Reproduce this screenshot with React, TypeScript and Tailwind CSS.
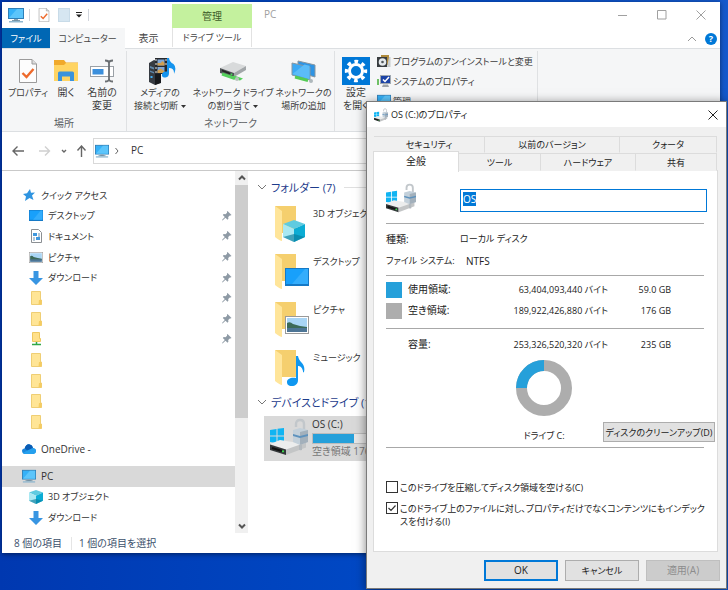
import { useEffect, useRef, type ReactNode } from "react";

function MonitorIcon({ className }: { className?: string }) {
  return (
    <svg viewBox="0 0 16 16" className={className}>
      <rect x="0.5" y="1.5" width="15" height="10" fill="#35b1f8" stroke="#2d7fb8" />
      <path d="M1 11 9 2h6v9z" fill="#5cc5fb" />
      <path d="M6 12h4v1.500H6z" fill="#8ba3b3" />
      <path d="M1 14h14v1.500H1z" fill="#8fb7cf" />
      <path d="M4 13h8v0.800H4z" fill="#5f8096" />
    </svg>
  );
}

function CheckDocIcon({ className }: { className?: string }) {
  return (
    <svg viewBox="0 0 18 24" className={className}>
      <path d="M0.500 0.500h12.500l4.500 4.500v18.500H0.500z" fill="#fdfdfd" stroke="#9b9b9b" />
      <path d="M13 0.500V5h4.500" fill="#ddd" stroke="#9b9b9b" />
      <path d="m3.500 14 4 4 7-8" fill="none" stroke="#ee6a2c" strokeWidth="2.400" />
    </svg>
  );
}

function OpenFolderIcon() {
  return (
    <svg viewBox="0 0 24 22" className="h-[22px] w-6">
      <path d="M0 0h10l2 2.500h12V21H0z" fill="#f0a92b" />
      <path d="M0 5h10l2-2h12v18H0z" fill="#ffd462" />
      <path d="M4 21v-8q0-1.500 1.500-1.500h13q1.500 0 1.500 1.500v8h-4v-4.500H8V21z" fill="#3b93dc" />
    </svg>
  );
}

function RenameIcon() {
  return (
    <svg viewBox="0 0 24 24" className="size-6">
      <rect x="0.500" y="7.500" width="23" height="10" fill="#fff" stroke="#9aa0a6" />
      <rect x="2.500" y="10" width="11" height="5.500" fill="#3b8fdc" />
      <path d="M15 1.500q4 0 4 2.500v16q0 2.500-4 2.500M23 1.500q-4 0-4 2.500v16q0 2.500 4 2.500" fill="none" stroke="#6b6f73" strokeWidth="1.800" />
    </svg>
  );
}

function MediaIcon() {
  return (
    <svg viewBox="0 0 28 28" className="ml-1 h-7 w-7">
      <path d="m1 6 5-3 6 2v21l-5 2-6-3z" fill="#363b42" />
      <path d="m7 8 6-2v20l-6 2z" fill="#171a1e" />
      <path d="m2 9 4 1.500v2L2 11zM2 13.500 6 15v1.500l-4-1.500z" fill="#5f86a8" />
      <rect x="2.500" y="19" width="2" height="2" fill="#3fb0f5" />
      <path d="M7 1h12v16H7z" fill="#26282c" />
      <path d="M9.500 2.500h7v6h-7zM9.500 10h7v6h-7z" fill="#7fa6d6" />
      <path d="M9.500 6h3l2-2 2 2v2.500h-7zM9.500 13.500l3.500-2 3.500 3v1.500h-7z" fill="#d0a052" />
      <path d="M7.500 2h1v2h-1zm0 4h1v2h-1zm0 4h1v2h-1zm0 4h1v2h-1zM17.500 2h1v2h-1zm0 4h1v2h-1z" fill="#e8e8e8" />
      <path d="M19 1h2q.500 4 4.500 6 3.500 3.500.500 10 .500-6-5-6v5q0 4-3.500 4.500-4 0-3.500-3 .500-3.500 5-3z" fill="#1594ee" />
    </svg>
  );
}

function NetDriveIcon() {
  return (
    <svg viewBox="0 0 30 20" className="h-5 w-[30px]">
      <path d="m2 7 13-6 13 4-12 7z" fill="#d8dadb" />
      <path d="m2 7 14 5v4L2 12z" fill="#505457" />
      <path d="m16 12 12-7v4l-12 7z" fill="#a2a6a9" />
      <path d="m4 9.500 8 3" stroke="#222" strokeWidth="1.500" />
      <circle cx="13.500" cy="13.300" r="0.900" fill="#40e050" />
      <path d="m4 13 13 4.500" stroke="#55cf5c" strokeWidth="3" />
      <path d="m13 17 9 2.500 3-2-9-3z" fill="#55cf5c" />
      <circle cx="19" cy="18" r="2" fill="#b9c4bd" />
    </svg>
  );
}

function NetPlaceIcon() {
  return (
    <svg viewBox="0 0 26 24" className="h-6 w-[26px]">
      <path d="m7 2 17 4v12L7 13z" fill="#2e94e4" stroke="#8796a0" />
      <path d="m1 4 18 4v13L1 16z" fill="#3ba9f4" stroke="#8796a0" />
      <path d="m1.500 15 12-9.500 5 1.300v13.500z" fill="#5bbcf8" />
      <path d="m4 18 13 3.500" stroke="#53cb55" strokeWidth="3" />
      <circle cx="20" cy="22" r="2" fill="#aeb8bc" />
    </svg>
  );
}

function SettingsIcon() {
  return (
    <svg viewBox="0 0 28 28" className="size-7">
      <path d="M0 0h28v28H0z" fill="#0078d7" />
      <circle cx="14" cy="14" r="6.500" fill="none" stroke="#fff" strokeWidth="3" />
      <circle cx="14" cy="14" r="9.400" fill="none" stroke="#fff" strokeWidth="3.600" strokeDasharray="3.690 3.690" strokeDashoffset="1.850" />
    </svg>
  );
}

function UninstallIcon() {
  return (
    <svg viewBox="0 0 14 14" className="size-[14px] shrink-0">
      <path d="M4 1h8v10H4z" fill="#b08b3c" />
      <path d="M0 3h10v10H0z" fill="#393d40" />
      <circle cx="5.500" cy="8" r="3.800" fill="#e5e9ec" />
      <circle cx="5.500" cy="8" r="1.300" fill="#50565a" />
      <path d="M12 3h1.500v10H10z" fill="#c8ccce" />
    </svg>
  );
}

function SystemIcon() {
  return (
    <svg viewBox="0 0 14 14" className="size-[14px] shrink-0">
      <path d="M0 5h2v6H0z" fill="#6fc065" />
      <rect x="3.500" y="1.500" width="10" height="8" fill="#1b43a6" stroke="#a0a8b0" />
      <path d="m6 5.500 2 2L12 3" fill="none" stroke="#fff" strokeWidth="1.500" />
      <path d="M6 10.500h5L12 13H5z" fill="#9ea3a8" />
    </svg>
  );
}

function DriveIcon({ className }: { className?: string }) {
  return (
    <svg viewBox="0 0 38 36" className={className}>
      <path d="m0 11 6.500-1v6.500H0zm7.500-1.200L14 8.900v7.600H7.500zM0 17.500h6.500V24L0 23zm7.500 0H14V25l-6.500-.900z" fill="#10b4f2" />
      <path d="m0 25 10-4 25 4-18 6z" fill="#eceded" />
      <path d="m0 25.500 16 5V36L0 31z" fill="#34383a" />
      <path d="m16 30.500 20-7v5L16 36z" fill="#c3c5c6" />
      <path d="m2 29 10 3" stroke="#111" strokeWidth="2" />
      <circle cx="13" cy="32.300" r="1.100" fill="#3ce04c" />
      <path d="M26 8V5q0-4 4-4t4 4v8" fill="none" stroke="#c2c7cb" strokeWidth="2.400" />
      <path d="m23 11 7-2 8 2v12l-8 3-7-3z" fill="#c3d0da" />
      <path d="m30 13 8-2v12l-8 3z" fill="#a3b0bb" />
      <path d="m23 15 7 2 8-2v2l-8 2-7-2z" fill="#5e92bd" />
      <path d="m29 26 3-1v6q-3 1-3-1z" fill="#b3b9be" />
    </svg>
  );
}

function CubeIcon({ className }: { className?: string }) {
  return (
    <svg viewBox="0 0 22 22" className={className}>
      <path d="m11 0 11 4-11 5L0 4z" fill="#5fcbe0" />
      <path d="M0 4l11 5v13L0 17z" fill="#a9e8f2" />
      <path d="m22 4-11 5v13l11-5z" fill="#0bacd4" />
      <path d="m11 14 11 3-11 5-11-5z" fill="#087c9c" opacity=".65" />
    </svg>
  );
}

function DesktopIcon({ className }: { className?: string }) {
  return (
    <svg viewBox="0 0 24 18" className={className} preserveAspectRatio="none">
      <path d="M0 0h24v18H0z" fill="#1579c6" />
      <path d="M1 1h22v15H1z" fill="#18a0fb" />
      <path d="M7 16 20 1h3v15z" fill="#34adfc" />
    </svg>
  );
}

function PictureIcon({ className }: { className?: string }) {
  return (
    <svg viewBox="0 0 24 18" className={className} preserveAspectRatio="none">
      <rect x="0.500" y="0.500" width="23" height="17" fill="#fff" stroke="#9a9a9a" />
      <path d="M2 2h20v14H2z" fill="#a9d5f5" />
      <path d="M2 7q3-2 6 1l7 2 7 1v2H2z" fill="#3c6a58" />
      <path d="M2 12h20v4H2z" fill="#4d7595" />
    </svg>
  );
}

function MusicIcon({ className }: { className?: string }) {
  return (
    <svg viewBox="0 0 18 30" className={className}>
      <path d="M9 0h2c1 7 8 7 6 16-1 1-1 0-1-1-1-4-3-5-5-5v14c0 4-3 6-6 6-4 0-5-2-5-4 0-3 4-5 9-4z" fill="#0f97f0" />
    </svg>
  );
}

function DocumentIcon() {
  return (
    <svg viewBox="0 0 11 14" className="h-[14px] w-[11px]">
      <path d="M0.500 0.500h7l3 3v10h-10z" fill="#fff" stroke="#8b8f93" />
      <path d="M2 4h4v3H2zM5 8h4v3H5z" fill="#3f97dc" />
      <path d="M7 5h2M7 7h2M2 9h2M2 11h2" stroke="#6d90ad" />
    </svg>
  );
}

function DownIcon() {
  return (
    <svg viewBox="0 0 14 14" className="size-[14px]">
      <path d="M4.500 0h5v7H14l-7 7-7-7h4.500z" fill="#3895e2" />
    </svg>
  );
}

function SmallFolderIcon() {
  return (
    <svg viewBox="0 0 11 14" className="h-[14px] w-[11px]">
      <path d="M0.500 0.500h9v8.500h1v4.500h-10z" fill="#ffe596" stroke="#efce74" />
      <path d="M8 9h2.500v4.500H7.500z" fill="#f5cc62" />
    </svg>
  );
}

function NetFolderIcon() {
  return (
    <svg viewBox="0 0 11 14" className="h-[14px] w-[11px]">
      <path d="M1.500 0.500h7v6h1v3h-8z" fill="#ffe08a" stroke="#efc860" />
      <path d="M5.500 10v2.500M1 12.500h9" stroke="#30a848" strokeWidth="1.500" />
    </svg>
  );
}

function StarIcon() {
  return (
    <svg viewBox="0 0 12 12" className="size-3">
      <path d="m7 0 1 3.800 4-.300L9 6.500l1.500 4.500L6.500 9 2 12l1-4.500L0 5l4-.700z" fill="#2f94e0" />
    </svg>
  );
}

function CloudIcon() {
  return (
    <svg viewBox="0 0 16 10" className="h-[10px] w-[14px]" preserveAspectRatio="none">
      <path d="M3 4.500Q5-.500 9 .500q3 .500 3.500 3.500Q16 4.500 16 7t-3 3H3Q0 9.500 0 7t3-2.500z" fill="#1a86dc" />
      <path d="M3 4.200Q5-.500 9 .500q3 .500 3.500 3.200L6.500 7z" fill="#0a5cb4" />
      <path d="M6 6.500 12.500 4Q16 4.500 16 7t-3 3H3q-1 0-2-1z" fill="#25a0ee" />
    </svg>
  );
}

function PinIcon() {
  return (
    <svg viewBox="0 0 10 10" className="size-[10px]">
      <path d="m5.500 0 4 4-1 .600-.700-.200L6.200 6l.200 1.800-.900.900-2-2L.500 9.500 0 9l2.800-3-2-2 .900-.900 1.800.200L5.100 1.700l-.200-.900z" fill="#8e9aa5" />
    </svg>
  );
}

function Chevron({ d, className }: { d: string; className: string }) {
  return (
    <svg viewBox="0 0 10 10" className={className} fill="none" stroke="currentColor">
      <path d={d} />
    </svg>
  );
}

function Caret() {
  return (
    <svg viewBox="0 0 5 3" className="ml-[3px] inline-block h-[3px] w-[5px] align-middle">
      <path d="M0 0h5L2.500 3z" fill="#333" />
    </svg>
  );
}

function RibbonButton({ icon, lines, className, menu }: { icon: ReactNode; lines: string[]; className: string; menu?: boolean }) {
  return (
    <button className={`flex shrink-0 flex-col items-center ${className}`}>
      <span className="flex h-[31px] items-center">{icon}</span>
      {lines.map((line, i) => (
        <span key={line} className="leading-[13px] whitespace-nowrap">
          {line}
          {menu && i === lines.length - 1 && <Caret />}
        </span>
      ))}
    </button>
  );
}

function RibbonGroup({ label, children }: { label: string; children: ReactNode }) {
  return (
    <section className="flex flex-col justify-between border-r border-[#dfe1e3] pt-1">
      <div className="flex">{children}</div>
      <div className="h-4 text-center leading-4 text-[#5c5f63]">{label}</div>
    </section>
  );
}

function Ribbon() {
  return (
    <div className="flex h-[84px] shrink-0 border-y border-[#dcdfe2] bg-[#f5f6f7] pt-[2px] text-[#3c3c3c]">
      <RibbonGroup label="場所">
        <RibbonButton className="w-[52px] text-[9px]" icon={<CheckDocIcon className="h-6 w-[18px]" />} lines={["プロパティ"]} />
        <RibbonButton className="w-6" icon={<OpenFolderIcon />} lines={["開く"]} />
        <RibbonButton className="w-12" icon={<RenameIcon />} lines={["名前の", "変更"]} />
      </RibbonGroup>
      <RibbonGroup label="ネットワーク">
        <RibbonButton className="w-[66px] text-[9px]" icon={<MediaIcon />} lines={["メディアの", "接続と切断"]} menu />
        <RibbonButton className="w-20 text-[9px]" icon={<NetDriveIcon />} lines={["ネットワーク ドライブ", "の割り当て"]} menu />
        <RibbonButton className="w-[61px] text-[9px]" icon={<NetPlaceIcon />} lines={["ネットワークの", "場所の追加"]} />
      </RibbonGroup>
      <section className="flex w-[203px] border-r border-[#dfe1e3]">
        <RibbonButton className="w-[42px] pt-1" icon={<SettingsIcon />} lines={["設定", "を開く"]} />
        <div className="flex flex-col text-[9px]">
          {[
            { icon: <UninstallIcon />, text: "プログラムのアンインストールと変更" },
            { icon: <SystemIcon />, text: "システムのプロパティ" },
            { icon: <MonitorIcon className="size-[14px] shrink-0" />, text: "管理" },
          ].map((item) => (
            <button key={item.text} className="flex h-5 items-center gap-[2px] whitespace-nowrap">
              {item.icon}
              {item.text}
            </button>
          ))}
        </div>
      </section>
    </div>
  );
}

function TitleBar() {
  return (
    <header className="flex h-[26px] shrink-0 items-stretch pl-[6px] text-[#a0a0a0]">
      <div className="flex w-[164px] items-center">
        <MonitorIcon className="size-4" />
        <span className="mx-[5px] h-3 w-px bg-gray-300" />
        <button aria-label="プロパティ" className="ml-[3px]">
          <CheckDocIcon className="h-[14px] w-3" />
        </button>
        <button aria-label="新しいフォルダー" className="ml-2 h-[14px] w-3 border border-[#c8dbe8] bg-[#d6e6f1]" />
        <button aria-label="カスタマイズ" className="ml-[6px]">
          <svg viewBox="0 0 6 6" className="size-[6px]">
            <path d="M0 0h6v1H0zM0 2.500h6L3 5.500z" fill="#222" />
          </svg>
        </button>
        <span className="mx-[6px] h-3 w-px bg-gray-300" />
      </div>
      <div className="mt-[2px] flex w-20 items-center justify-center bg-[#c4f19e] text-[#3d5c2a]">管理</div>
      <span className="ml-3 flex-1 leading-[25px]">PC</span>
      <div className="flex w-[118px] items-center justify-between pr-[14px] pl-4">
        <button aria-label="最小化">
          <Chevron className="size-[10px]" d="M0 5.500h9" />
        </button>
        <button aria-label="最大化">
          <Chevron className="size-[10px]" d="M0.500 0.500h8.500v8.500H0.500z" />
        </button>
        <button aria-label="閉じる">
          <Chevron className="size-[10px]" d="m0.500 0.500 9 9m0-9-9 9" />
        </button>
      </div>
    </header>
  );
}

function TabRow() {
  return (
    <nav className="-mb-px flex h-[21px] shrink-0 items-stretch text-[9px] text-[#444]">
      <button className="mb-px w-12 bg-[#0067b4] text-white">ファイル</button>
      <button className="z-10 w-[75px] bg-[#f5f6f7] whitespace-nowrap">コンピューター</button>
      <button className="w-[47px] text-[10px]">表示</button>
      <button className="mb-[2px] w-20 border-x border-[#e2e2e2] whitespace-nowrap">ドライブ ツール</button>
      <div className="flex flex-1 items-center justify-end gap-2 pr-[3px]">
        <Chevron className="size-[10px] text-[#999]" d="m1 7 4-4 4 4" />
        <button aria-label="ヘルプ" className="size-3 rounded-full bg-[#0078d7] leading-3 font-bold text-white">
          ?
        </button>
      </div>
    </nav>
  );
}

function AddressRow() {
  return (
    <div className="flex h-[39px] shrink-0 items-center border-b border-[#c9c9c9] pb-px pl-2 text-[#666]">
      <div className="flex w-[83px] items-center">
        <svg viewBox="0 0 80 12" className="h-3 w-20" fill="none" stroke="currentColor" strokeWidth="1.400">
          <path d="M14 6H3.500m4-4.500L3 6l4.500 4.500" />
          <path d="M29 6h10m-4-4.500L39.500 6 35 10.500" stroke="#d0d0d0" />
          <path d="m52 5 2 2 2-2" />
          <path d="M71.500 12V1.500m-4 4L71.500 1l4 4.500" />
        </svg>
      </div>
      <div className="mr-[6px] flex h-[26px] flex-1 items-center border border-[#d9d9d9] pl-px">
        <MonitorIcon className="size-[14px]" />
        <Chevron className="ml-[3px] size-[10px]" d="m3.500 2 2.500 3-2.500 3" />
        <button className="ml-[9px] text-[#333]">PC</button>
      </div>
    </div>
  );
}

function SideItem({ icon, text, pinned, top, active }: { icon: ReactNode; text?: string; pinned?: boolean; top?: boolean; active?: boolean }) {
  return (
    <li className={active ? "bg-[#d9d9d9] text-[10px]" : ""}>
      <a href="#" className={`flex h-full min-h-5 items-center pr-[3px] ${top ? "pl-[19px]" : "pl-[26px]"}`}>
        <span className="flex w-4 justify-center">{icon}</span>
        <span className="ml-1 flex-1 whitespace-nowrap">{text}</span>
        {pinned && <PinIcon />}
      </a>
    </li>
  );
}

function Sidebar() {
  return (
    <aside className="w-[233px] shrink-0 overflow-hidden pt-[14px] text-[#333]">
      <ul className="grid h-[247px] auto-rows-fr text-[9px]">
        <SideItem icon={<StarIcon />} text="クイック アクセス" top />
        <SideItem icon={<DesktopIcon className="h-[11px] w-[14px]" />} text="デスクトップ" pinned />
        <SideItem icon={<DocumentIcon />} text="ドキュメント" pinned />
        <SideItem icon={<PictureIcon className="h-[11px] w-[14px]" />} text="ピクチャ" pinned />
        <SideItem icon={<DownIcon />} text="ダウンロード" pinned />
        <SideItem icon={<SmallFolderIcon />} pinned />
        <SideItem icon={<SmallFolderIcon />} pinned />
        <SideItem icon={<NetFolderIcon />} pinned />
        <SideItem icon={<SmallFolderIcon />} />
        <SideItem icon={<SmallFolderIcon />} />
        <SideItem icon={<SmallFolderIcon />} />
        <SideItem icon={<SmallFolderIcon />} />
      </ul>
      <ul className="my-[7px]">
        <SideItem icon={<CloudIcon />} text="OneDrive -" top />
      </ul>
      <ul className="grid h-[62px] auto-rows-fr text-[9px]">
        <SideItem icon={<MonitorIcon className="size-[14px]" />} text="PC" top active />
        <SideItem icon={<CubeIcon className="size-[14px]" />} text="3D オブジェクト" />
        <SideItem icon={<DownIcon />} text="ダウンロード" />
      </ul>
    </aside>
  );
}

function Scrollbar() {
  return (
    <div className="flex w-[13px] shrink-0 flex-col items-center bg-[#f0f0f0] text-[#555]">
      <Chevron className="my-[2px] size-[10px] stroke-2" d="m2 6.500 3-3 3 3" />
      <div className="h-[233px] w-full bg-[#cdcdcd]" />
      <Chevron className="mt-auto mb-[2px] size-[10px] stroke-2" d="m2 3.500 3 3 3-3" />
    </div>
  );
}

function BigFolder({ children }: { children: ReactNode }) {
  return (
    <span className="relative h-9 w-[35px] shrink-0">
      <svg viewBox="0 0 35 36" className="h-9 w-[35px]">
        <path d="M1 0h21v27H8z" fill="#f5cf6e" />
        <path d="m1 0 7 5v30q-2 0-7-4z" fill="#ffe59a" />
      </svg>
      <span className="absolute right-0 bottom-0">{children}</span>
    </span>
  );
}

function GroupHeader({ text }: { text: string }) {
  return (
    <h2 className="flex h-6 items-center gap-1 pl-[9px] text-[11px] whitespace-nowrap text-[#1e3c8c]">
      <Chevron className="size-[10px] text-[#777]" d="m1 3 4 4 4-4" />
      {text}
      <span className="ml-1 h-px flex-1 bg-[#e0e0e0]" />
    </h2>
  );
}

const folders = [
  { name: "3D オブジェクト", icon: <CubeIcon className="mr-1 size-[22px]" /> },
  { name: "デスクトップ", icon: <DesktopIcon className="mb-1 h-[18px] w-6" /> },
  { name: "ピクチャ", icon: <PictureIcon className="mb-1 h-[18px] w-6" /> },
  { name: "ミュージック", icon: <MusicIcon className="mr-1 h-[30px] w-[18px]" /> },
];

function FileList() {
  return (
    <main className="min-w-0 flex-1 pt-1 text-[#333]">
      <GroupHeader text="フォルダー (7)" />
      <ul className="h-[191px] pt-[7px] text-[9px]">
        {folders.map((folder) => (
          <li key={folder.name} className="flex h-12 gap-1 pl-[26px]">
            <BigFolder>{folder.icon}</BigFolder>
            <span className="leading-4">{folder.name}</span>
          </li>
        ))}
      </ul>
      <GroupHeader text="デバイスとドライブ (1)" />
      <div className="mt-[2px] ml-4 flex h-[45px] w-[200px] gap-1 bg-[#d9d9d9] pt-[2px] pl-[6px]">
        <DriveIcon className="h-[38px] w-[38px]" />
        <div className="flex-1 whitespace-nowrap">
          <div className="h-[15px] leading-[13px]">OS (C:)</div>
          <div className="h-[11px] border border-[#bcbcbc] bg-[#e6e6e6]">
            <div className="h-full w-[27%] bg-[#26a0da]" />
          </div>
          <div className="leading-[15px] text-[#777]">空き領域 176 GB/235 GB</div>
        </div>
      </div>
    </main>
  );
}

function Explorer() {
  return (
    <div className="absolute top-[2px] right-2 bottom-[37px] left-[2px] flex flex-col bg-white shadow-[0_1px_5px_rgba(0,0,0,0.5)]">
      <TitleBar />
      <TabRow />
      <Ribbon />
      <AddressRow />
      <div className="flex min-h-0 flex-1 overflow-hidden">
        <Sidebar />
        <Scrollbar />
        <FileList />
      </div>
      <footer className="flex h-5 shrink-0 items-center pl-3 text-[#3b4f6b]">
        <span className="border-r border-[#e5e5e5] pr-[9px]">8 個の項目</span>
        <span className="pl-[7px]">1 個の項目を選択</span>
      </footer>
    </div>
  );
}

function Tab({ text, width, active }: { text: string; width: string; active?: boolean }) {
  return (
    <button
      role="tab"
      aria-selected={!!active}
      className={
        active
          ? `z-10 -mt-[2px] -mb-px border border-b-0 border-[#dcdcdc] bg-white pb-[2px] text-[10px] ${width}`
          : `border border-l-0 border-[#dcdcdc] border-b-transparent bg-[#f0f0f0] ${width}`
      }
    >
      {text}
    </button>
  );
}

function CheckOption({ checked, children }: { checked?: boolean; children: ReactNode }) {
  return (
    <label className="flex items-start gap-[2px] leading-[13px] whitespace-nowrap">
      <span className="relative flex shrink-0">
        <input type="checkbox" defaultChecked={checked} className="peer size-3 appearance-none border border-[#333] bg-white" />
        <svg viewBox="0 0 12 12" className="pointer-events-none absolute inset-0 hidden size-3 peer-checked:block">
          <path d="m2.500 6 2.500 2.500 4.500-5" fill="none" stroke="#333" strokeWidth="1.200" />
        </svg>
      </span>
      <span>{children}</span>
    </label>
  );
}

function CapacityTable() {
  return (
    <table className="w-full table-fixed text-right text-[9px]">
      <colgroup>
        <col className="w-[22px]" />
        <col className="w-[68px]" />
        <col className="w-[132px]" />
        <col className="w-[63px]" />
        <col />
      </colgroup>
      <tbody>
        <tr className="h-[3px]" />
        <tr className="h-[21px]">
          <td>
            <div className="size-4 bg-[#26a0da]" />
          </td>
          <th scope="row" className="text-left text-[10px] font-normal">使用領域:</th>
          <td>63,404,093,440 バイト</td>
          <td>59.0 GB</td>
        </tr>
        <tr className="h-[21px]">
          <td>
            <div className="size-4 bg-[#adadad]" />
          </td>
          <th scope="row" className="text-left text-[10px] font-normal">空き領域:</th>
          <td>189,922,426,880 バイト</td>
          <td>176 GB</td>
        </tr>
        <tr className="h-[7px] border-b border-[#a8a8a8]">
          <td colSpan={5} />
        </tr>
        <tr className="h-8">
          <td />
          <th scope="row" className="text-left text-[10px] font-normal">容量:</th>
          <td>253,326,520,320 バイト</td>
          <td>235 GB</td>
        </tr>
      </tbody>
    </table>
  );
}

function GeneralPanel() {
  const nameRef = useRef<HTMLInputElement>(null);

  useEffect(() => {
    nameRef.current?.focus();
    nameRef.current?.select();
  }, []);

  return (
    <div role="tabpanel" className="ml-[6px] mr-2 border border-[#dcdcdc] bg-white pl-3">
      <div className="mr-[13px] border-b border-[#a8a8a8]">
        <div className="-mr-[3px] flex h-[52px] items-start justify-between pt-3">
          <DriveIcon className="size-[30px]" />
          <input
            ref={nameRef}
            aria-label="ボリューム ラベル"
            defaultValue="OS"
            className="mt-[6px] h-[23px] w-[247px] border border-[#0078d7] px-[2px] pb-1 outline-none selection:bg-[#0078d7] selection:text-white"
          />
        </div>
      </div>
      <dl className="mr-[13px] border-b border-[#a8a8a8] pt-1 pb-[3px] text-[9px] leading-[22px]">
        <div className="flex">
          <dt className="w-[74px] text-[10px]">種類:</dt>
          <dd>ローカル ディスク</dd>
        </div>
        <div className="flex">
          <dt className="w-20 whitespace-nowrap">ファイル システム:</dt>
          <dd className="text-[10px]">NTFS</dd>
        </div>
      </dl>
      <div className="mr-[13px]">
        <CapacityTable />
      </div>
      <div className="mr-[2px] grid grid-cols-[120px_76px_1fr] text-[9px]">
        <svg viewBox="0 0 56 56" className="col-start-2 mx-auto size-14" fill="none" strokeWidth="11">
          <circle cx="28" cy="28" r="22.500" stroke="#adadad" />
          <path d="M5.500 28A22.500 22.500 0 0 1 28 5.500" stroke="#26a0da" />
        </svg>
        <div className="col-start-2 mt-[6px] pt-[7px] text-center">ドライブ C:</div>
        <button className="col-start-3 mt-[6px] h-5 w-28 justify-self-end border border-[#adadad] bg-[#e1e1e1] whitespace-nowrap">
          ディスクのクリーンアップ(D)
        </button>
      </div>
      <hr className="mt-[5px] mr-[13px] border-[#a8a8a8]" />
      <div className="flex flex-col gap-2 pt-[33px] pb-[23px] text-[9px]">
        <CheckOption>このドライブを圧縮してディスク領域を空ける(C)</CheckOption>
        <CheckOption checked>
          このドライブ上のファイルに対し、プロパティだけでなくコンテンツにもインデック
          <br />
          スを付ける(I)
        </CheckOption>
      </div>
    </div>
  );
}

function PropertiesDialog() {
  return (
    <div
      role="dialog"
      aria-label="OS (C:)のプロパティ"
      className="absolute top-[101px] right-px w-[361px] border border-[#7a7a7a] bg-[#f0f0f0] text-[#222] shadow-[0_2px_10px_rgba(0,0,0,0.5)]"
    >
      <div className="flex h-[25px] items-center bg-white pr-2 pl-[7px]">
        <DriveIcon className="size-[14px]" />
        <h1 className="ml-[3px] flex-1 text-[9px]">OS (C:)のプロパティ</h1>
        <button aria-label="閉じる">
          <Chevron className="size-[10px]" d="m0.500 0.500 9 9m0-9-9 9" />
        </button>
      </div>
      <div role="tablist" className="pt-[9px] pr-[9px] pl-[6px] text-[9px]">
        <div className="flex h-[17px] pl-px">
          <Tab text="セキュリティ" width="w-[111px]" />
          <Tab text="以前のバージョン" width="w-[135px]" />
          <Tab text="クォータ" width="flex-1" />
        </div>
        <div className="-mb-px flex h-[18px]">
          <Tab text="全般" width="w-[86px]" active />
          <Tab text="ツール" width="w-[82px]" />
          <Tab text="ハードウェア" width="w-[95px]" />
          <Tab text="共有" width="flex-1" />
        </div>
      </div>
      <GeneralPanel />
      <div className="flex justify-end gap-[7px] pt-2 pr-[6px] pb-[7px]">
        <button className="h-[21px] w-[74px] border-2 border-[#0078d7] bg-[#e1e1e1]">OK</button>
        <button className="h-[21px] w-[74px] border border-[#adadad] bg-[#e1e1e1] text-[9px]">キャンセル</button>
        <button disabled className="h-[21px] w-[74px] border border-[#bfbfbf] bg-[#cccccc] text-[#8c8c8c]">
          適用(A)
        </button>
      </div>
    </div>
  );
}

export default function App() {
  return (
    <div className="relative h-screen w-full overflow-hidden bg-linear-to-r from-[#0038b0] via-[#0048c4] to-[#1459cc] font-['Open_Sans','Noto_Sans_CJK_JP',sans-serif] text-[10px] leading-[13px] [font-feature-settings:'palt']">
      <Explorer />
      <PropertiesDialog />
    </div>
  );
}
